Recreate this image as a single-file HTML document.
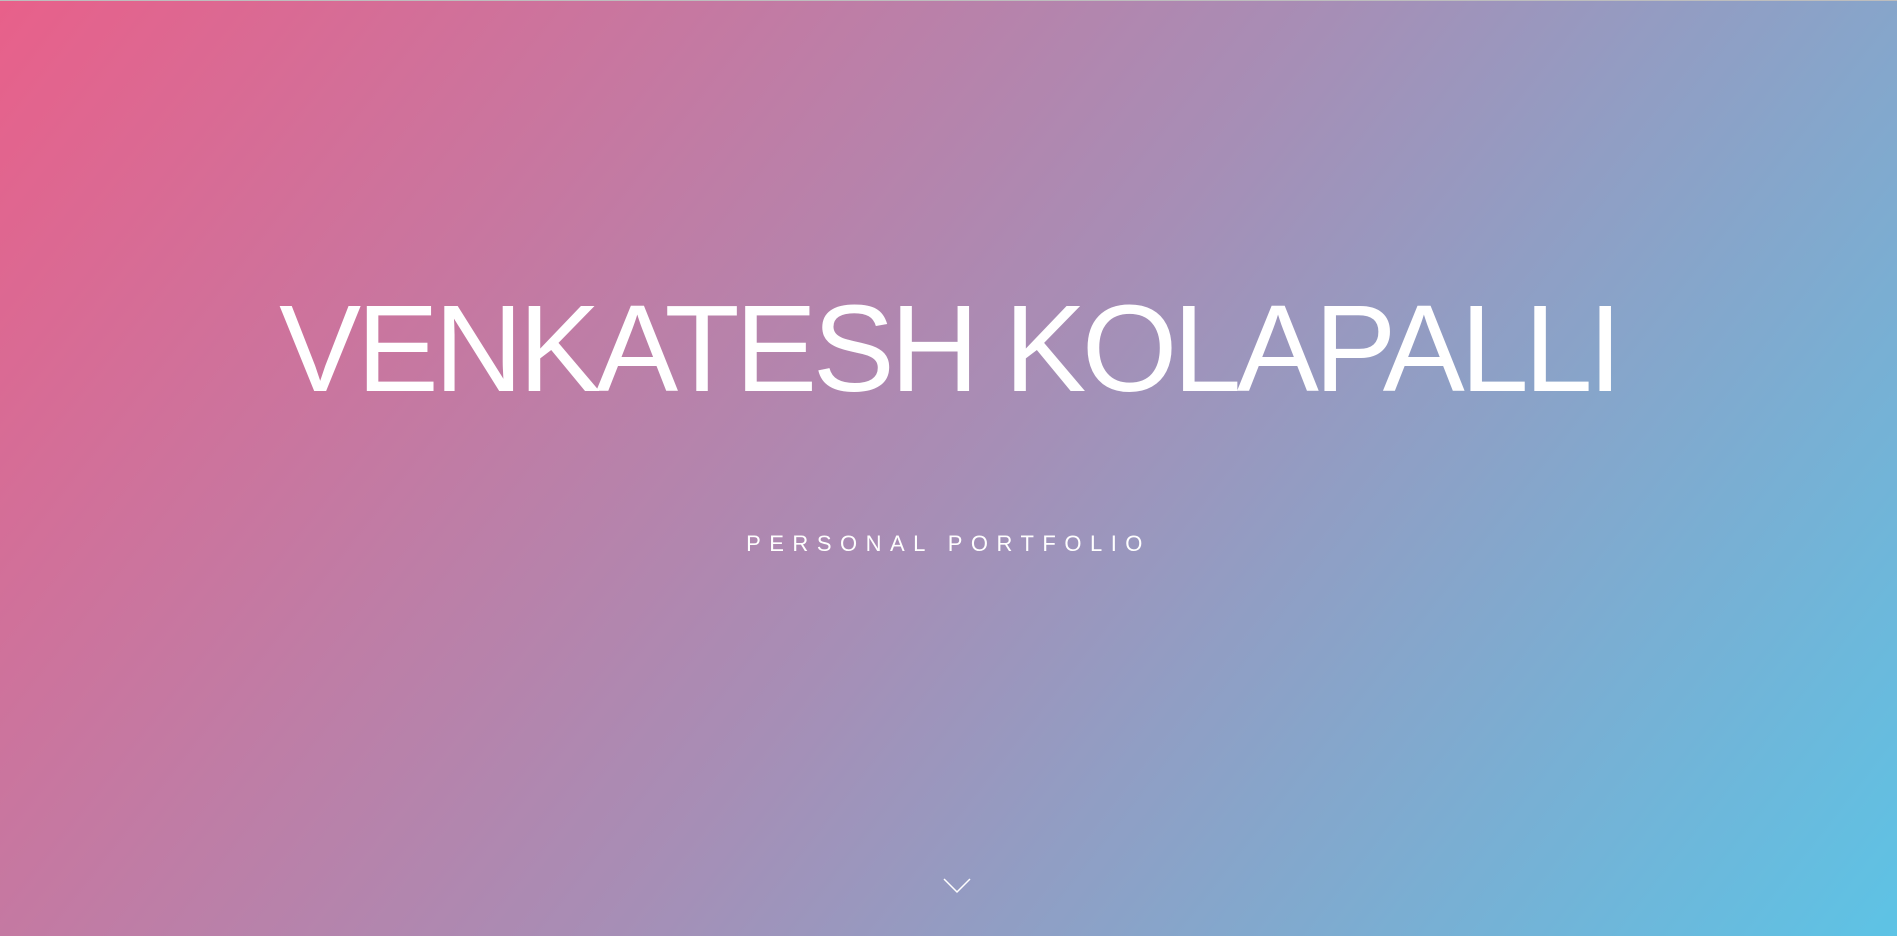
<!DOCTYPE html>
<html><head><style>
html,body{margin:0;padding:0;width:1897px;height:936px;overflow:hidden}
body{background:linear-gradient(128deg,#e8608a 0%,#a88db5 50%,#5dc3e5 100%);border-top:1px solid #bdbdbd;box-sizing:border-box;position:relative;font-family:"Liberation Sans",sans-serif;color:#fff}
h1{position:absolute;left:0;right:0;top:282px;margin:0;text-align:center;font-weight:normal;font-size:123px;line-height:134px;letter-spacing:-4.5px;white-space:nowrap}
.sub{position:absolute;left:0;right:0;top:529px;text-align:center;font-size:22px;letter-spacing:8.5px;line-height:28px}
svg{position:absolute;left:943px;top:877px}
</style></head><body>
<h1>VENKATESH KOLAPALLI</h1>
<div class="sub">PERSONAL PORTFOLIO</div>
<svg width="28" height="16" viewBox="0 0 28 16"><path d="M1 1 L14 14 L27 1" fill="none" stroke="#fff" stroke-width="1.5"/></svg>
</body></html>
